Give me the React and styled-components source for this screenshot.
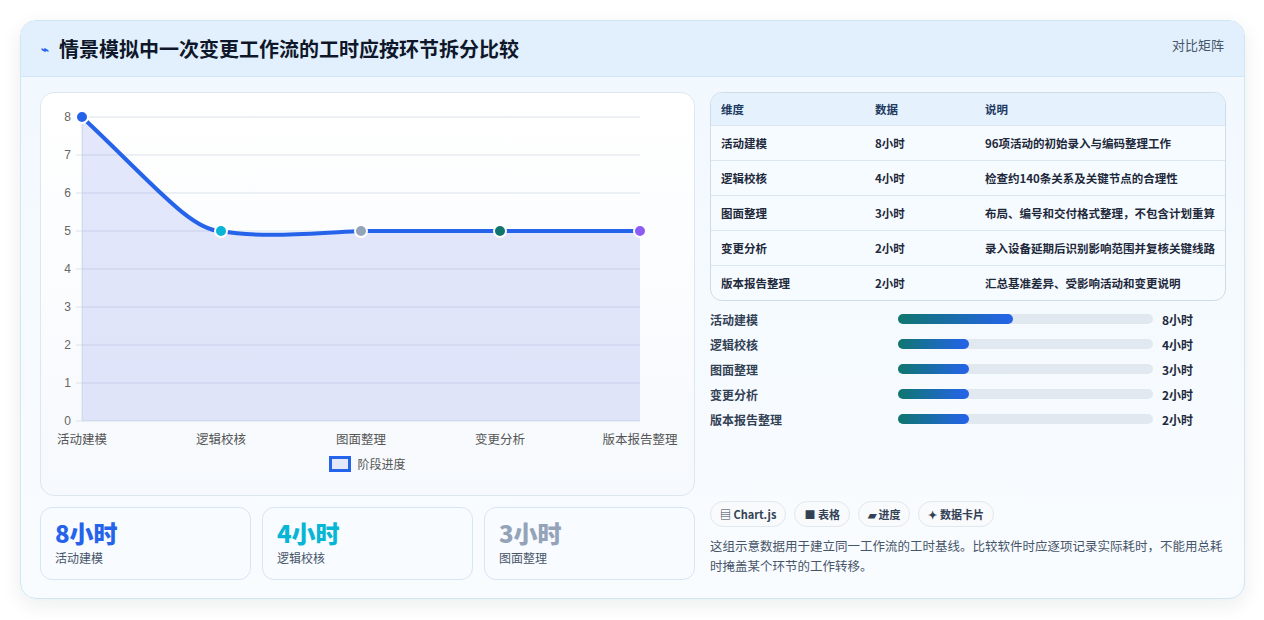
import styled, { createGlobalStyle } from 'styled-components';

const GlobalStyle = createGlobalStyle`
  body {
    margin: 0;
    background: #ffffff;
    font-family: "Noto Sans CJK SC", "Noto Sans", sans-serif;
    color: #1e293b;
  }
`;

const stages = [
  { name: '活动建模', hours: 8, desc: '96项活动的初始录入与编码整理工作', fill: 45, dot: '#2563eb' },
  { name: '逻辑校核', hours: 4, desc: '检查约140条关系及关键节点的合理性', fill: 28, dot: '#06b6d4' },
  { name: '图面整理', hours: 3, desc: '布局、编号和交付格式整理，不包含计划重算', fill: 28, dot: '#94a3b8' },
  { name: '变更分析', hours: 2, desc: '录入设备延期后识别影响范围并复核关键线路', fill: 28, dot: '#0f766e' },
  { name: '版本报告整理', hours: 2, desc: '汇总基准差异、受影响活动和变更说明', fill: 28, dot: '#8b5cf6' },
];
const chartValues = [8, 5, 5, 5, 5];

const stats = [
  { value: '8小时', label: '活动建模', color: '#2563eb' },
  { value: '4小时', label: '逻辑校核', color: '#06b6d4' },
  { value: '3小时', label: '图面整理', color: '#94a3b8' },
];

export default function App() {
  const xs = [41, 180, 320, 459, 599];
  const y = v => 24 + (8 - v) * 38;
  const pts = chartValues.map((v, i) => [xs[i], y(v)]);
  const line = `M${pts[0][0]},${pts[0][1]} C110,${y(6.3)} 150,${y(5)} ${pts[1][0]},${pts[1][1]} C220,${y(4.8)} 280,${y(4.95)} ${pts[2][0]},${pts[2][1]} L${pts[4][0]},${pts[4][1]}`;
  const area = `${line} L599,328 L41,328 Z`;

  return (
    <>
      <GlobalStyle />
      <Page>
        <Card>
          <Header>
            <Title><TitleIcon>⌁</TitleIcon>情景模拟中一次变更工作流的工时应按环节拆分比较</Title>
            <HeaderTag>对比矩阵</HeaderTag>
          </Header>
          <Body>
            <LeftCol>
              <ChartPanel>
                <svg width="654" height="368" viewBox="0 0 654 368">
                  {[0, 1, 2, 3, 4, 5, 6, 7, 8].map(v => (
                    <g key={v}>
                      <line x1="35" x2="599" y1={y(v)} y2={y(v)} stroke="#dbe2ea" strokeWidth="1" />
                      <text x="30" y={y(v) + 4} textAnchor="end" fontSize="12" fill="#666" fontFamily="Liberation Sans, sans-serif">{v}</text>
                    </g>
                  ))}
                  <line x1="41" x2="41" y1={y(8)} y2={y(0)} stroke="#dbe2ea" />
                  <path d={area} fill="rgba(99,120,230,0.17)" />
                  <path d={line} fill="none" stroke="#2563eb" strokeWidth="4" strokeLinecap="round" />
                  {pts.map((p, i) => (
                    <circle key={i} cx={p[0]} cy={p[1]} r="6" fill={stages[i].dot} stroke="#fff" strokeWidth="2" />
                  ))}
                  {stages.map((s, i) => (
                    <text key={s.name} x={xs[i]} y="351" textAnchor="middle" fontSize="12.5" fill="#555">{s.name}</text>
                  ))}
                </svg>
                <Legend><LegendBox />阶段进度</Legend>
              </ChartPanel>
              <StatRow>
                {stats.map(s => (
                  <StatCard key={s.label}>
                    <StatValue $color={s.color}>{s.value}</StatValue>
                    <StatLabel>{s.label}</StatLabel>
                  </StatCard>
                ))}
              </StatRow>
            </LeftCol>
            <RightCol>
              <Table>
                <thead>
                  <tr><Th $w="134px">维度</Th><Th $w="90px">数据</Th><Th>说明</Th></tr>
                </thead>
                <tbody>
                  {stages.map(s => (
                    <tr key={s.name}><Td>{s.name}</Td><Td>{s.hours}小时</Td><Td>{s.desc}</Td></tr>
                  ))}
                </tbody>
              </Table>
              <Bars>
                {stages.map(s => (
                  <BarRow key={s.name}>
                    <BarLabel>{s.name}</BarLabel>
                    <Track><Fill style={{ width: `${s.fill}%` }} /></Track>
                    <BarValue>{s.hours}小时</BarValue>
                  </BarRow>
                ))}
              </Bars>
              <Chips>
                <Chip>▤ Chart.js</Chip>
                <Chip>■ 表格</Chip>
                <Chip>▰ 进度</Chip>
                <Chip>✦ 数据卡片</Chip>
              </Chips>
              <Note>这组示意数据用于建立同一工作流的工时基线。比较软件时应逐项记录实际耗时，不能用总耗时掩盖某个环节的工作转移。</Note>
            </RightCol>
          </Body>
        </Card>
      </Page>
    </>
  );
}

const Page = styled.div`
  padding: 20px;
`;

const Card = styled.div`
  width: 1223px;
  border: 1px solid #cfe6f3;
  border-radius: 16px;
  background: linear-gradient(180deg, #f1f8fe 0%, #f9fcff 100%);
  box-shadow: 0 6px 20px rgba(15, 23, 42, 0.08);
  overflow: hidden;
`;

const Header = styled.div`
  height: 55px;
  display: flex;
  align-items: center;
  justify-content: space-between;
  padding: 0 20px;
  background: #e2f0fd;
  border-bottom: 1px solid #d3e6f5;
`;

const Title = styled.h1`
  margin: 0;
  font-size: 20px;
  font-weight: 700;
  color: #0f172a;
  display: flex;
  align-items: center;
`;

const TitleIcon = styled.span`
  color: #2563eb;
  font-size: 13px;
  margin-right: 10px;
`;

const HeaderTag = styled.span`
  font-size: 13px;
  color: #475569;
  align-self: flex-start;
  margin-top: 14px;
`;

const Body = styled.div`
  display: flex;
  gap: 15px;
  padding: 15px 18px 18px 19px;
`;

const LeftCol = styled.div`
  width: 655px;
  display: flex;
  flex-direction: column;
  gap: 11px;
`;

const ChartPanel = styled.div`
  height: 404px;
  border: 1px solid #dde7f0;
  border-radius: 14px;
  background: linear-gradient(180deg, #ffffff 0%, #f6f9fd 100%);
  box-sizing: border-box;
  overflow: hidden;
  svg { display: block; }
`;

const Legend = styled.div`
  display: flex;
  align-items: center;
  justify-content: center;
  gap: 6px;
  font-size: 12px;
  color: #555;
  margin-top: -6px;
`;

const LegendBox = styled.span`
  width: 16px;
  height: 10px;
  border: 3px solid #2563eb;
  background: #e2e8f8;
`;

const StatRow = styled.div`
  display: grid;
  grid-template-columns: repeat(3, 1fr);
  gap: 11px;
`;

const StatCard = styled.div`
  height: 73px;
  box-sizing: border-box;
  padding: 9px 14px;
  border: 1px solid #d6e6f2;
  border-radius: 12px;
  background: #f8fbff;
`;

const StatValue = styled.div`
  font-size: 24px;
  font-weight: 800;
  line-height: 32px;
  color: ${p => p.$color};
`;

const StatLabel = styled.div`
  font-size: 12px;
  color: #475569;
`;

const RightCol = styled.div`
  width: 516px;
  display: flex;
  flex-direction: column;
`;

const Table = styled.table`
  width: 100%;
  border-collapse: separate;
  border-spacing: 0;
  border: 1px solid #cfdbe7;
  border-radius: 12px;
  overflow: hidden;
  font-size: 11.5px;
  background: #f6fbff;
  tr + tr td, tbody tr:first-child td { border-top: 1px solid #dbe6ef; }
`;

const Th = styled.th`
  width: ${p => p.$w || 'auto'};
  height: 32px;
  text-align: left;
  padding: 0 10px;
  background: #e5f1fd;
  color: #1e3a5f;
  font-weight: 700;
`;

const Td = styled.td`
  height: 34px;
  padding: 0 10px;
  color: #1e293b;
  font-weight: 600;
`;

const Bars = styled.div`
  display: flex;
  flex-direction: column;
  gap: 5px;
  margin-top: 8px;
`;

const BarRow = styled.div`
  display: grid;
  grid-template-columns: 188px 255px 1fr;
  align-items: center;
  height: 20px;
`;

const BarLabel = styled.span`
  font-size: 12px;
  font-weight: 600;
  color: #334155;
`;

const Track = styled.div`
  height: 10px;
  border-radius: 5px;
  background: #e2e8f0;
  width: 255px;
`;

const Fill = styled.div`
  height: 100%;
  border-radius: 5px;
  background: linear-gradient(90deg, #0f766e, #2563eb);
`;

const BarValue = styled.span`
  font-size: 12px;
  font-weight: 700;
  color: #1e293b;
  padding-left: 9px;
`;

const Chips = styled.div`
  display: flex;
  gap: 8px;
  margin-top: 72px;
`;

const Chip = styled.span`
  font-size: 11px;
  font-weight: 700;
  color: #334155;
  padding: 4px 9px;
  border: 1px solid #e2e8f0;
  border-radius: 14px;
  background: #f8fafc;
`;

const Note = styled.p`
  margin: 9px 0 0;
  font-size: 12.5px;
  line-height: 20px;
  color: #475569;
`;
